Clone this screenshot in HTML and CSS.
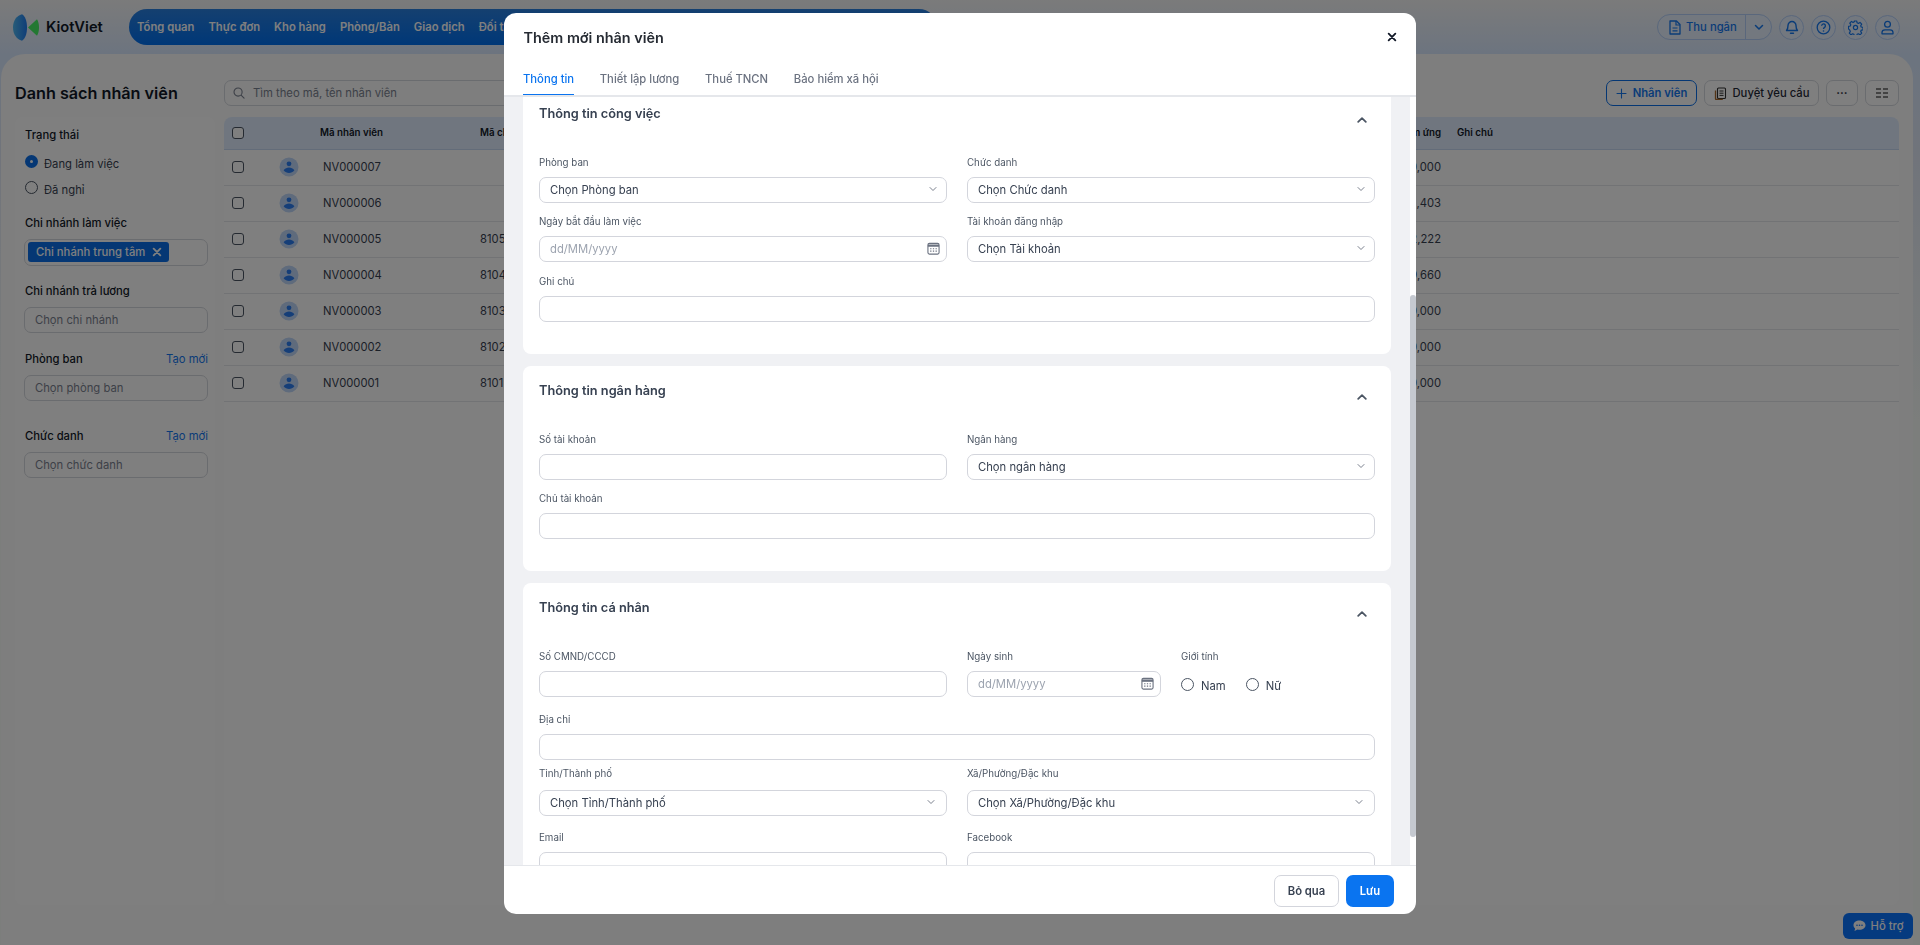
FILE: index.html
```html
<!DOCTYPE html>
<html lang="vi">
<head>
    <meta charset="UTF-8">
    <title>Danh sách nhân viên</title>
    <link rel="stylesheet" href="styles.css">
</head>
<body>

<svg class="sprite" xmlns="http://www.w3.org/2000/svg">
    <symbol id="i-down" viewBox="0 0 10 10"><path d="M2 3.500 5 6.500l3-3" fill="none" stroke="currentColor" stroke-width=".9" stroke-linecap="round" stroke-linejoin="round"/></symbol>
    <symbol id="i-up" viewBox="0 0 10 10"><path d="M1.200 6.800 5 3.200l3.800 3.600" fill="none" stroke="currentColor" stroke-width="1.800" stroke-linecap="round" stroke-linejoin="round"/></symbol>
    <symbol id="i-x" viewBox="0 0 12 12"><path d="M2 2l8 8M10 2l-8 8" fill="none" stroke="currentColor" stroke-width="2.200" stroke-linecap="round"/></symbol>
    <symbol id="i-cal" viewBox="0 0 14 14"><rect x="1" y="1.500" width="12" height="11.500" rx="1.600" fill="none" stroke="currentColor" stroke-width="1.200"/><path d="M1 2.600h12v2.600H1z" fill="currentColor"/><path d="M3.400 7.200h1.400M6.300 7.200h1.400M9.200 7.200h1.400M3.400 9.800h1.400M6.300 9.800h1.400M9.200 9.800h1.400" stroke="currentColor" stroke-width="1.200"/></symbol>
    <symbol id="i-avatar" viewBox="0 0 20 20"><circle cx="10" cy="10" r="9.500" fill="#bfd6f8"/><circle cx="10" cy="6.800" r="2.400" fill="#2a7df0"/><path d="M4.600 13.300C6 11.300 8 10.500 10 10.500s4 .8 5.400 2.800C14 15.200 12 16 10 16s-4-.8-5.400-2.700z" fill="#2a7df0"/></symbol>
</svg>

<div class="page">
    <header class="topbar">
        <div class="logo">
            <svg width="26" height="27" viewBox="0 0 26 27">
                <defs>
                    <linearGradient id="logo-blue" x1="0" x2="1" y1="0" y2="0">
                        <stop offset="0" stop-color="#50b8f0"/>
                        <stop offset="1" stop-color="#1f7cf0"/>
                    </linearGradient>
                </defs>
                <path d="M9 .3C3.500 1.500 0 7 0 13.500S3.500 25.500 9 26.700c3.200-1.800 5-7 5-13.200S12.200 2 9 .3z" fill="url(#logo-blue)"/>
                <path d="M15 13.500 24 5.300c1.500 2.400 2 5.200 2 8.200s-.5 5.800-2 8.200z" fill="#46f064"/>
            </svg>
            <span class="logo-text">KiotViet</span>
        </div>
        <nav class="main-nav">
            <a>Tổng quan</a>
            <a>Thực đơn</a>
            <a>Kho hàng</a>
            <a>Phòng/Bàn</a>
            <a>Giao dịch</a>
            <a>Đối tác</a>
        </nav>
        <div class="top-actions">
            <div class="cashier">
                <span class="cashier-main">
                    <svg width="14" height="15" viewBox="0 0 14 15"><path d="M2 1h6.500L12 4.500V14H2z" fill="none" stroke="currentColor" stroke-width="1.300" stroke-linejoin="round"/><path d="M8 1v4h4M4.500 8h5M4.500 10.800h5" fill="none" stroke="currentColor" stroke-width="1.200"/></svg>
                    Thu ngân
                </span>
                <span class="cashier-more"><svg width="10" height="10" viewBox="0 0 10 10"><path d="M1.500 3.500 5 7l3.500-3.500" fill="none" stroke="currentColor" stroke-width="1.500" stroke-linecap="round" stroke-linejoin="round"/></svg></span>
            </div>
            <span class="round-btn"><svg width="14" height="15" viewBox="0 0 14 15"><path d="M7 1.500a4 4 0 0 0-4 4c0 3.500-1.500 5-1.500 5h11S11 9 11 5.500a4 4 0 0 0-4-4z" fill="none" stroke="currentColor" stroke-width="1.400" stroke-linejoin="round"/><path d="M5.500 13.200h3" stroke="currentColor" stroke-width="1.400" stroke-linecap="round"/></svg></span>
            <span class="round-btn"><svg width="15" height="15" viewBox="0 0 15 15"><circle cx="7.500" cy="7.500" r="6.300" fill="none" stroke="currentColor" stroke-width="1.300"/><path d="M5.600 5.800a1.900 1.900 0 1 1 3 1.600c-.7.500-1.100.9-1.100 1.600" fill="none" stroke="currentColor" stroke-width="1.300"/><circle cx="7.500" cy="11" r=".8" fill="currentColor"/></svg></span>
            <span class="round-btn"><svg width="15" height="15" viewBox="0 0 15 15"><path d="M6.300 1h2.400l.4 1.800 1.300.6 1.600-1 1.700 1.700-1 1.600.5 1.300 1.800.4v2.400l-1.800.4-.5 1.300 1 1.600-1.700 1.700-1.600-1-1.300.5-.4 1.800H6.300l-.4-1.800-1.300-.5-1.600 1-1.700-1.700 1-1.600-.5-1.300L.5 8.800V6.400l1.800-.4.5-1.300-1-1.600 1.700-1.700 1.600 1 1.300-.6z" fill="none" stroke="currentColor" stroke-width="1.200" stroke-linejoin="round"/><circle cx="7.500" cy="7.500" r="2.100" fill="none" stroke="currentColor" stroke-width="1.200"/></svg></span>
            <span class="round-btn"><svg width="15" height="15" viewBox="0 0 15 15"><circle cx="7.500" cy="4.300" r="2.900" fill="none" stroke="currentColor" stroke-width="1.300"/><path d="M2 13.800v-1.300c0-1.700 1.300-2.700 3-2.700h5c1.700 0 3 1 3 2.700v1.300z" fill="none" stroke="currentColor" stroke-width="1.300" stroke-linejoin="round"/></svg></span>
        </div>
    </header>

    <main class="panel">
        <div class="toolbar">
            <h1 class="page-title">Danh sách nhân viên</h1>
            <div class="search">
                <svg width="12" height="12" viewBox="0 0 13 13"><circle cx="5.500" cy="5.500" r="4.400" fill="none" stroke="currentColor" stroke-width="1.200"/><path d="M9 9l3 3" stroke="currentColor" stroke-width="1.200" stroke-linecap="round"/></svg>
                Tìm theo mã, tên nhân viên
            </div>
            <button class="tool-btn tool-primary"><svg width="11" height="11" viewBox="0 0 11 11"><path d="M5.500 1v9M1 5.500h9" stroke="currentColor" stroke-width="1.100" stroke-linecap="round"/></svg>Nhân viên</button>
            <button class="tool-btn tool-approve"><svg width="13" height="13" viewBox="0 0 13 13"><rect x="3.500" y="1" width="8" height="10.500" rx="1" fill="none" stroke="#333" stroke-width="1.100"/><path d="M1.500 3.500v8.200c0 .5.400.8.800.8h6.500" fill="none" stroke="#a8692c" stroke-width="1.300"/><path d="M5.500 4h4M5.500 6.200h4M5.500 8.400h4" stroke="#333" stroke-width="1"/></svg>Duyệt yêu cầu</button>
            <button class="tool-btn tool-more">···</button>
            <button class="tool-btn tool-grid"><svg width="12" height="10" viewBox="0 0 12 10"><path d="M0 1h5M7 1h5M0 5h5M7 5h5M0 9h5M7 9h5" stroke="#111" stroke-width="1.200"/></svg></button>
        </div>

        <div class="content">
            <aside class="filters">
                <div class="filter-label">Trạng thái</div>
                <label class="filter-radio first"><span class="radio checked"></span><span class="radio-text">Đang làm việc</span></label>
                <label class="filter-radio"><span class="radio"></span><span class="radio-text">Đã nghỉ</span></label>

                <div class="filter-label mt-20">Chi nhánh làm việc</div>
                <div class="filter-control tall">
                    <span class="tag">Chi nhánh trung tâm <svg width="10" height="10"><use href="#i-x"/></svg></span>
                </div>

                <div class="filter-label mt-18">Chi nhánh trả lương</div>
                <div class="filter-control placeholder">Chọn chi nhánh</div>

                <div class="filter-label mt-19 with-link">Phòng ban <a>Tạo mới</a></div>
                <div class="filter-control placeholder">Chọn phòng ban</div>

                <div class="filter-label mt-28 with-link">Chức danh <a>Tạo mới</a></div>
                <div class="filter-control placeholder">Chọn chức danh</div>
            </aside>

            <section class="table-card">
                <div class="t-row t-head">
                    <span class="cell-check"><span class="checkbox"></span></span>
                    <span class="cell-avatar"></span>
                    <span class="cell-code">Mã nhân viên</span>
                    <span class="cell-att">Mã chấm công</span>
                    <span class="cell-adv">Tạm ứng</span>
                    <span class="cell-note">Ghi chú</span>
                </div>
                <div class="t-row">
                    <span class="cell-check"><span class="checkbox"></span></span>
                    <span class="cell-avatar"><svg width="20" height="20"><use href="#i-avatar"/></svg></span>
                    <span class="cell-code">NV000007</span>
                    <span class="cell-att"></span>
                    <span class="cell-adv">1,000,000</span>
                    <span class="cell-note"></span>
                </div>
                <div class="t-row">
                    <span class="cell-check"><span class="checkbox"></span></span>
                    <span class="cell-avatar"><svg width="20" height="20"><use href="#i-avatar"/></svg></span>
                    <span class="cell-code">NV000006</span>
                    <span class="cell-att"></span>
                    <span class="cell-adv">1,403</span>
                    <span class="cell-note"></span>
                </div>
                <div class="t-row">
                    <span class="cell-check"><span class="checkbox"></span></span>
                    <span class="cell-avatar"><svg width="20" height="20"><use href="#i-avatar"/></svg></span>
                    <span class="cell-code">NV000005</span>
                    <span class="cell-att">8105</span>
                    <span class="cell-adv">2,222</span>
                    <span class="cell-note"></span>
                </div>
                <div class="t-row">
                    <span class="cell-check"><span class="checkbox"></span></span>
                    <span class="cell-avatar"><svg width="20" height="20"><use href="#i-avatar"/></svg></span>
                    <span class="cell-code">NV000004</span>
                    <span class="cell-att">8104</span>
                    <span class="cell-adv">9,660</span>
                    <span class="cell-note"></span>
                </div>
                <div class="t-row">
                    <span class="cell-check"><span class="checkbox"></span></span>
                    <span class="cell-avatar"><svg width="20" height="20"><use href="#i-avatar"/></svg></span>
                    <span class="cell-code">NV000003</span>
                    <span class="cell-att">8103</span>
                    <span class="cell-adv">1,000,000</span>
                    <span class="cell-note"></span>
                </div>
                <div class="t-row">
                    <span class="cell-check"><span class="checkbox"></span></span>
                    <span class="cell-avatar"><svg width="20" height="20"><use href="#i-avatar"/></svg></span>
                    <span class="cell-code">NV000002</span>
                    <span class="cell-att">8102</span>
                    <span class="cell-adv">1,000,000</span>
                    <span class="cell-note"></span>
                </div>
                <div class="t-row">
                    <span class="cell-check"><span class="checkbox"></span></span>
                    <span class="cell-avatar"><svg width="20" height="20"><use href="#i-avatar"/></svg></span>
                    <span class="cell-code">NV000001</span>
                    <span class="cell-att">8101</span>
                    <span class="cell-adv">1,000,000</span>
                    <span class="cell-note"></span>
                </div>
            </section>
        </div>
    </main>

    <button class="support">
        <svg width="13" height="12" viewBox="0 0 13 12"><path d="M6.500.5C3 .5.500 2.600.5 5.200c0 1.300.6 2.400 1.600 3.200L1.500 11l3-1.500c.6.100 1.300.2 2 .2 3.500 0 6-2 6-4.500S10 .5 6.500.5z" fill="currentColor"/><circle cx="4" cy="5.200" r=".8" fill="#0a74ff"/><circle cx="6.500" cy="5.200" r=".8" fill="#0a74ff"/><circle cx="9" cy="5.200" r=".8" fill="#0a74ff"/></svg>
        Hỗ trợ
    </button>
</div>

<div class="overlay">
    <div class="modal">
        <div class="modal-head">
            <h2 class="modal-title">Thêm mới nhân viên</h2>
            <svg class="modal-close" width="10" height="10"><use href="#i-x"/></svg>
        </div>
        <div class="tabs">
            <a class="tab active">Thông tin</a>
            <a class="tab">Thiết lập lương</a>
            <a class="tab">Thuế TNCN</a>
            <a class="tab">Bảo hiểm xã hội</a>
        </div>

        <div class="modal-scroll">
            <div class="modal-body">
                <section class="card first">
                    <div class="card-head">
                        <h3 class="card-title">Thông tin công việc</h3>
                        <svg class="card-toggle" width="10" height="10"><use href="#i-up"/></svg>
                    </div>
                    <div class="row">
                        <div class="field">
                            <label class="field-label">Phòng ban</label>
                            <div class="control select">Chọn Phòng ban<svg width="10" height="10"><use href="#i-down"/></svg></div>
                        </div>
                        <div class="field">
                            <label class="field-label">Chức danh</label>
                            <div class="control select">Chọn Chức danh<svg width="10" height="10"><use href="#i-down"/></svg></div>
                        </div>
                    </div>
                    <div class="row">
                        <div class="field">
                            <label class="field-label">Ngày bắt đầu làm việc</label>
                            <div class="control date">dd/MM/yyyy<svg width="13" height="13"><use href="#i-cal"/></svg></div>
                        </div>
                        <div class="field">
                            <label class="field-label">Tài khoản đăng nhập</label>
                            <div class="control select">Chọn Tài khoản<svg width="10" height="10"><use href="#i-down"/></svg></div>
                        </div>
                    </div>
                    <div class="row full gap-12">
                        <div class="field">
                            <label class="field-label">Ghi chú</label>
                            <input class="control" type="text">
                        </div>
                    </div>
                </section>

                <section class="card">
                    <div class="card-head">
                        <h3 class="card-title">Thông tin ngân hàng</h3>
                        <svg class="card-toggle" width="10" height="10"><use href="#i-up"/></svg>
                    </div>
                    <div class="row">
                        <div class="field">
                            <label class="field-label">Số tài khoản</label>
                            <input class="control" type="text">
                        </div>
                        <div class="field">
                            <label class="field-label">Ngân hàng</label>
                            <div class="control select">Chọn ngân hàng<svg width="10" height="10"><use href="#i-down"/></svg></div>
                        </div>
                    </div>
                    <div class="row full">
                        <div class="field">
                            <label class="field-label">Chủ tài khoản</label>
                            <input class="control" type="text">
                        </div>
                    </div>
                </section>

                <section class="card">
                    <div class="card-head">
                        <h3 class="card-title">Thông tin cá nhân</h3>
                        <svg class="card-toggle" width="10" height="10"><use href="#i-up"/></svg>
                    </div>
                    <div class="row">
                        <div class="field">
                            <label class="field-label">Số CMND/CCCD</label>
                            <input class="control" type="text">
                        </div>
                        <div class="split">
                            <div class="field birth">
                                <label class="field-label">Ngày sinh</label>
                                <div class="control date">dd/MM/yyyy<svg width="13" height="13"><use href="#i-cal"/></svg></div>
                            </div>
                            <div class="field">
                                <label class="field-label">Giới tính</label>
                                <div class="gender">
                                    <label class="gender-item"><span class="radio"></span><span>Nam</span></label>
                                    <label class="gender-item"><span class="radio"></span><span>Nữ</span></label>
                                </div>
                            </div>
                        </div>
                    </div>
                    <div class="row full gap-15">
                        <div class="field">
                            <label class="field-label">Địa chỉ</label>
                            <input class="control" type="text">
                        </div>
                    </div>
                    <div class="row gap-6">
                        <div class="field loose">
                            <label class="field-label">Tỉnh/Thành phố</label>
                            <div class="control select far">Chọn Tỉnh/Thành phố<svg width="10" height="10"><use href="#i-down"/></svg></div>
                        </div>
                        <div class="field loose">
                            <label class="field-label">Xã/Phường/Đặc khu</label>
                            <div class="control select far">Chọn Xã/Phường/Đặc khu<svg width="10" height="10"><use href="#i-down"/></svg></div>
                        </div>
                    </div>
                    <div class="row gap-14">
                        <div class="field">
                            <label class="field-label">Email</label>
                            <input class="control" type="text">
                        </div>
                        <div class="field">
                            <label class="field-label">Facebook</label>
                            <input class="control" type="text">
                        </div>
                    </div>
                </section>
            </div>
            <div class="scroll-rail"><span class="scroll-thumb"></span></div>
        </div>

        <div class="modal-foot">
            <button class="btn">Bỏ qua</button>
            <button class="btn btn-save">Lưu</button>
        </div>
    </div>
</div>

</body>
</html>
```

FILE: styles.css
```css
* {
    box-sizing: border-box;
}
html, body {
    margin: 0;
    height: 100%;
    overflow: hidden;
}
body {
    font-family: Inter, "Noto Sans", sans-serif;
    font-size: 11.25px;
    color: #1f2937;
    background: linear-gradient(180deg, #f6f6f6 0, #d8e8ff 56px, #e2e9f6 160px, #f8fcf8 420px);
}
h1, h2, h3 {
    margin: 0;
}
button {
    font-family: inherit;
    cursor: pointer;
}
.sprite {
    display: none;
}
.page {
    height: 945px;
    display: flex;
    flex-direction: column;
}

/* top bar */
.topbar {
    height: 54px;
    flex: none;
    display: flex;
    align-items: center;
    padding: 0 20px 0 13px;
}
.logo {
    width: 116px;
    display: flex;
    align-items: center;
    gap: 7px;
}
.logo-text {
    font-size: 14.7px;
    font-weight: 600;
    color: #111827;
}
.main-nav {
    width: 808px;
    height: 36px;
    display: flex;
    align-items: center;
    gap: 14px;
    padding-left: 8px;
    border-radius: 18px;
    background: linear-gradient(180deg, #2a80e0, #0070f0);
}
.main-nav a {
    color: #fff;
    font-weight: 600;
}
.top-actions {
    margin-left: auto;
    display: flex;
    align-items: center;
    gap: 7px;
}
.cashier {
    width: 115px;
    height: 26px;
    display: flex;
    border: 1px solid #b4cff8;
    border-radius: 13px;
    background: #e6f0ff;
    color: #1478f0;
    font-weight: 500;
}
.cashier-main {
    flex: 1;
    display: flex;
    align-items: center;
    gap: 4px;
    padding-left: 10px;
    border-right: 1px solid #b4cff8;
}
.cashier-more {
    width: 25px;
    display: flex;
    align-items: center;
    justify-content: center;
}
.round-btn {
    width: 25px;
    height: 25px;
    display: flex;
    align-items: center;
    justify-content: center;
    border: 1px solid #b4cff8;
    border-radius: 50%;
    background: #e6f0ff;
    color: #1478f0;
}

/* page body */
.panel {
    flex: 1;
    margin: 0 7px 0 1px;
    padding: 26px 14px 40px 14px;
    display: flex;
    flex-direction: column;
    background: #fcfcfc;
    border-radius: 24px 24px 0 0;
}
.toolbar {
    height: 26px;
    flex: none;
    display: flex;
    align-items: center;
    gap: 7px;
}
.page-title {
    width: 202px;
    font-size: 16.2px;
    font-weight: 600;
    color: #111827;
}
.search {
    width: 1150px;
    height: 26px;
    margin-right: auto;
    display: flex;
    align-items: center;
    gap: 8px;
    padding-left: 8px;
    border: 1px solid #d5d8de;
    border-radius: 7px;
    color: #7b8290;
}
.tool-btn {
    height: 26px;
    display: flex;
    align-items: center;
    justify-content: center;
    gap: 6px;
    padding: 0;
    border: 1px solid #d5d8de;
    border-radius: 7px;
    background: #fff;
    color: #1f2937;
    font-size: 11.25px;
    font-weight: 500;
}
.tool-primary {
    width: 91px;
    border-color: #0a6fe8;
    color: #1478f0;
    font-weight: 600;
}
.tool-approve {
    width: 115px;
}
.tool-more {
    width: 32px;
    font-weight: 700;
}
.tool-grid {
    width: 34px;
}
.content {
    flex: 1;
    margin-top: 11px;
    display: flex;
    gap: 9px;
}

/* filters */
.filters {
    width: 200px;
    flex: none;
    padding: 11px 7px 0 9px;
    background: #fff;
    border-radius: 8px;
}
.filter-label {
    height: 14px;
    margin: 0 0 9px 1px;
    line-height: 14px;
    font-weight: 500;
    color: #111827;
}
.with-link {
    display: flex;
    justify-content: space-between;
}
.with-link a {
    color: #1478f0;
    font-weight: 400;
}
.mt-18 { margin-top: 18px; }
.mt-19 { margin-top: 19px; }
.mt-20 { margin-top: 20px; }
.mt-28 { margin-top: 28px; }
.filter-radio {
    height: 18px;
    margin: 8px 0 0 1px;
    display: flex;
    align-items: center;
    gap: 6px;
    color: #374151;
}
.filter-radio.first {
    margin-top: 10px;
}
.radio-text {
    padding-top: 5px;
}
.radio {
    width: 13px;
    height: 13px;
    flex: none;
    border: 1px solid #4b5563;
    border-radius: 50%;
    background: #fff;
}
.radio.checked {
    border: 5px solid #0a6fe8;
}
.filter-control {
    height: 26px;
    border: 1px solid #d5d8de;
    border-radius: 7px;
}
.filter-control.placeholder {
    display: flex;
    align-items: center;
    padding-left: 10px;
    color: #7b8290;
}
.filter-control.tall {
    height: 27px;
    padding: 2px 3px;
}
.tag {
    width: 141px;
    height: 20px;
    display: flex;
    align-items: center;
    gap: 7px;
    padding-left: 8px;
    border-radius: 3px;
    background: #0a6fe8;
    color: #fff;
    font-weight: 500;
    white-space: nowrap;
}

/* table */
.table-card {
    flex: 1;
    background: #fff;
    border-radius: 8px;
}
.t-row {
    height: 36px;
    display: flex;
    align-items: center;
    padding-bottom: 2px;
    border-bottom: 1px solid #e5e7eb;
    color: #374151;
}
.t-head {
    height: 33px;
    padding-bottom: 1px;
    background: #e0edff;
    border-bottom-color: #c6d8f2;
    border-radius: 8px 8px 0 0;
    color: #111827;
    font-size: 9.75px;
    font-weight: 600;
}
.cell-check {
    width: 48px;
    padding-left: 8px;
    display: flex;
}
.checkbox {
    width: 12px;
    height: 12px;
    border: 1px solid #4b5563;
    border-radius: 3px;
    background: #fff;
}
.cell-avatar {
    width: 48px;
    display: flex;
    padding-left: 7px;
}
.cell-code {
    width: 160px;
}
.t-row:not(.t-head) .cell-code {
    padding-left: 3px;
}
.cell-att {
    width: 821px;
}
.cell-adv {
    width: 140px;
    text-align: right;
}
.cell-note {
    margin-left: 16px;
}

.support {
    position: fixed;
    right: 7px;
    bottom: 6px;
    width: 70px;
    height: 26px;
    display: flex;
    align-items: center;
    justify-content: center;
    gap: 5px;
    padding: 0;
    border: none;
    border-radius: 6px;
    background: #0a74ff;
    color: #fff;
    font-size: 11.25px;
    font-weight: 500;
}

/* modal */
.overlay {
    position: fixed;
    top: 0;
    left: 0;
    right: 0;
    bottom: 0;
    display: flex;
    justify-content: center;
    padding-top: 13px;
    background: rgba(0, 0, 0, 0.5);
}
.modal {
    width: 912px;
    height: 901px;
    display: flex;
    flex-direction: column;
    background: #fff;
    border-radius: 12px;
    overflow: hidden;
}
.modal-head {
    height: 48px;
    flex: none;
    display: flex;
    align-items: center;
    justify-content: space-between;
    padding: 0 19px 0 19.5px;
}
.modal-title {
    font-size: 14.4px;
    font-weight: 600;
    color: #262b33;
}
.modal-close {
    color: #111827;
}
.tabs {
    height: 36px;
    flex: none;
    display: flex;
    gap: 25.7px;
    padding-left: 19px;
    border-bottom: 2px solid #e5e7eb;
}
.tab {
    height: 34px;
    padding-top: 10px;
    line-height: 16px;
    font-weight: 500;
    color: #6b7280;
}
.tab.active {
    color: #0a74f0;
    border-bottom: 1px solid #0a74f0;
}
.modal-scroll {
    flex: 1;
    min-height: 0;
    display: flex;
}
.modal-body {
    flex: 1;
    padding: 0 19px;
    background: #f0f1f4;
    overflow: hidden;
}
.scroll-rail {
    width: 6px;
    flex: none;
    padding-top: 198px;
}
.scroll-thumb {
    display: block;
    height: 542px;
    border-radius: 3px;
    background: #c5c9d0;
}
.card {
    margin-bottom: 12px;
    padding: 0 16px 32px;
    background: #fff;
    border-radius: 8px;
}
.card.first {
    margin-top: -8px;
}
.card-head {
    height: 66px;
    display: flex;
    justify-content: space-between;
    padding: 17px 8px 0 0;
}
.card-title {
    line-height: 16px;
    font-size: 12.75px;
    font-weight: 600;
    color: #374151;
}
.card-toggle {
    margin-top: 9px;
    color: #4b5563;
}
.row {
    display: grid;
    grid-template-columns: 408px 408px;
    column-gap: 20px;
    margin-top: 11px;
}
.card-head + .row {
    margin-top: 0;
}
.row.full {
    grid-template-columns: 836px;
}
.row.gap-6 { margin-top: 6px; }
.row.gap-12 { margin-top: 12px; }
.row.gap-14 { margin-top: 14px; }
.row.gap-15 { margin-top: 15px; }
.field-label {
    display: block;
    height: 14px;
    margin-bottom: 8px;
    line-height: 16px;
    font-size: 9.75px;
    color: #4b5563;
}
.field.loose .field-label {
    margin-bottom: 10px;
}
.control {
    display: flex;
    align-items: center;
    justify-content: space-between;
    width: 100%;
    height: 26px;
    padding: 0 8px 0 10px;
    border: 1px solid #d3d5dc;
    border-radius: 7px;
    background: #fff;
    color: #374151;
    font-family: inherit;
    font-size: 11.25px;
}
.control svg {
    color: #6b7280;
    margin-top: -2px;
}
.control.far {
    padding-right: 10px;
}
.date {
    color: #9ca3af;
    padding-right: 6px;
}
.split {
    display: flex;
    gap: 20px;
}
.birth {
    width: 194px;
}
.gender {
    height: 26px;
    display: flex;
    align-items: center;
    gap: 20px;
}
.gender-item {
    display: flex;
    align-items: center;
    gap: 7px;
    color: #374151;
}
.gender-item span:last-child {
    padding-top: 3px;
}
.modal-foot {
    height: 49px;
    flex: none;
    display: flex;
    justify-content: flex-end;
    gap: 7px;
    padding: 9px 22px 0 0;
    border-top: 1px solid #e5e7eb;
}
.btn {
    width: 65px;
    height: 32px;
    border: 1px solid #d3d5dc;
    border-radius: 7px;
    background: #fff;
    color: #374151;
    font-size: 11.25px;
    font-weight: 600;
}
.btn-save {
    width: 48px;
    border: none;
    background: #0a74f0;
    color: #fff;
}
```
